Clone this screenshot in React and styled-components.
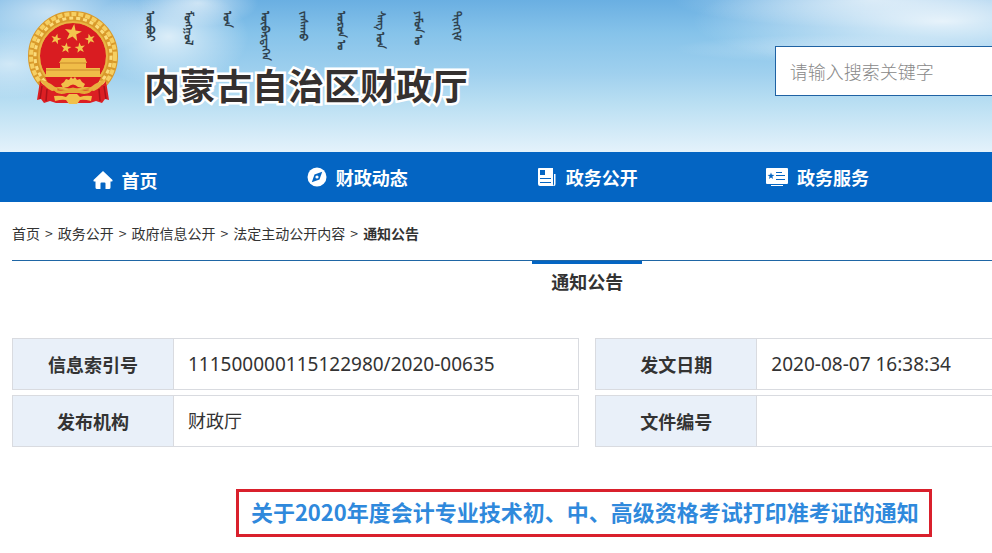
import React from 'react';
import styled, { createGlobalStyle } from 'styled-components';

const GlobalStyle = createGlobalStyle`
    * {
        box-sizing: border-box;
    }
    body {
        margin: 0;
        background: #fff;
        color: #333;
        font-family: 'Noto Sans CJK SC', 'Noto Sans', sans-serif;
        font-size: 18px;
    }
    a {
        color: inherit;
        text-decoration: none;
    }
`;
const Page = styled.div`
    overflow: hidden;
`;
// The content column is wider than a small window and runs off its right edge
const Container = styled.div`
    width: 116%;
    margin-left: 12px;
`;
const Header = styled.header`
    height: 152px;
    background:
        radial-gradient(ellipse 80px 34px at 1% 42%, rgba(255, 255, 255, 0.55), transparent),
        radial-gradient(ellipse 110px 50px at 5% 8%, rgba(255, 255, 255, 0.6), transparent),
        radial-gradient(ellipse 80px 50px at 17% 24%, rgba(255, 255, 255, 0.7), transparent),
        radial-gradient(ellipse 60px 24px at 20% 2%, rgba(255, 255, 255, 0.6), transparent),
        radial-gradient(ellipse 250px 50px at 95% 14%, rgba(255, 255, 255, 0.8), transparent),
        radial-gradient(ellipse 200px 28px at 88% 0%, rgba(255, 255, 255, 0.6), transparent),
        radial-gradient(ellipse 160px 14px at 84% 32%, rgba(255, 255, 255, 0.3), transparent),
        linear-gradient(#6aafe2 0%, #86c3ea 22%, #9fd0ee 48%, #bce0f3 70%, #e4f2fb 100%);
`;
const HeaderInner = styled(Container)`
    display: flex;
    justify-content: space-between;
    align-items: flex-start;
    padding-left: 16px;
`;
const Brand = styled.div`
    display: flex;
    gap: 26px;
    padding-top: 11px;
`;
const Names = styled.div`
    display: flex;
    flex-direction: column;
`;
const Mongolian = styled.div`
    display: flex;
    justify-content: space-between;
    height: 48px;
    padding-right: 2px;
    font-size: 11px;
    line-height: 16px;
    font-weight: 700;
    color: #30424f;
`;
const Word = styled.span`
    writing-mode: vertical-lr;
    white-space: nowrap;
`;
const SiteName = styled.h1`
    margin: 0;
    font-size: 36px;
    line-height: 50px;
    font-weight: 700;
    color: #35302f;
    -webkit-text-stroke: 5px #fff;
    paint-order: stroke fill;
`;
const Search = styled.input`
    flex: none;
    width: 388px;
    height: 50px;
    margin-top: 46px;
    padding: 0 14px;
    border: 1px solid #1f62a3;
    background: #fff;
    font: inherit;
    outline: none;
    &::placeholder {
        color: #888;
        font-weight: 300;
        opacity: 1;
    }
`;
const Nav = styled.nav`
    background: #0465c3;
    color: #fff;
`;
const NavList = styled(Container)`
    display: grid;
    grid-template-columns: repeat(5, 1fr);
`;
const NavLink = styled.a`
    display: flex;
    align-items: center;
    justify-content: center;
    gap: 9px;
    height: 50px;
    padding: ${(props) => (props.$home ? '6px 4px 0 0' : '0')};
    line-height: 26px;
    font-weight: 700;
`;
const Breadcrumb = styled.nav`
    display: flex;
    gap: 5px;
    height: 59px;
    padding-top: 21px;
    border-bottom: 1px solid #1f66a5;
    font-size: 14px;
    line-height: 20px;
`;
const Current = styled.span`
    font-weight: 700;
`;
const Tab = styled.h2`
    width: 110px;
    height: 43px;
    margin: 0 auto 29px;
    padding-top: 4px;
    border-top: 3px solid #0465c3;
    font-size: 18px;
    line-height: 26px;
    text-align: center;
`;
const Tables = styled.div`
    display: grid;
    grid-template-columns: 1fr 1fr;
    gap: 16px;
`;
const Table = styled.table`
    width: 100%;
    table-layout: fixed;
    border-collapse: separate;
    border-spacing: 0 5px;
`;
const Label = styled.th`
    width: 161px;
    height: 52px;
    padding: 0;
    border: 1px solid #d9dbe0;
    border-right: 0;
    background: #e9f0f9;
    font-weight: 700;
`;
const Value = styled.td`
    padding: 0 14px;
    border: 1px solid #d9dbe0;
    font-family: 'Noto Sans', 'Noto Sans CJK SC', sans-serif;
    font-size: ${(props) => (props.$numeric ? '19px' : '18px')};
    line-height: 26px;
`;
const Heading = styled.div`
    display: flex;
    justify-content: center;
    padding: 37px 7px 16px 0;
`;
const Title = styled.h2`
    margin: 0;
    padding: 3px 10px 7px 12px;
    border: 3px solid #d9202c;
    font-size: 22px;
    line-height: 32px;
    color: #2f89dc;
    white-space: nowrap;
`;

const star = '0,-10 2.4,-3.2 9.5,-3.1 3.8,1.2 5.9,8.1 0,4 -5.9,8.1 -3.8,1.2 -9.5,-3.1 -2.4,-3.2';

const Emblem = () => (
    <svg width="90" height="94" viewBox="0 0 90 94" aria-hidden="true">
        <circle cx="45" cy="45" r="38" fill="#d91c21" />
        <circle cx="45" cy="45" r="39" fill="none" stroke="#d99a2b" strokeWidth="12" />
        <circle cx="45" cy="45" r="42" fill="none" stroke="#f6cf62" strokeWidth="4" strokeDasharray="5 2" />
        <circle cx="45" cy="45" r="38" fill="none" stroke="#fbdc7c" strokeWidth="3" strokeDasharray="4 3" />
        <circle cx="45" cy="45" r="34" fill="none" stroke="#e9b444" strokeWidth="2" />
        <g fill="#f3c44d">
            <polygon points={star} transform="translate(45 22) rotate(8) scale(.9)" />
            <polygon points={star} transform="translate(28 28) rotate(15) scale(.55)" />
            <polygon points={star} transform="translate(62 28) rotate(-15) scale(.55)" />
            <polygon points={star} transform="translate(38 37) rotate(8) scale(.55)" />
            <polygon points={star} transform="translate(52 37) rotate(-8) scale(.55)" />
        </g>
        <path d="M34 47 H57 L59 52 H58 V57 H72 V66 H18 V57 H32 V52 H31 Z" fill="#f0bd48" />
        <path d="M32 52 H58 M18 59 H72" stroke="#c98a2a" />
        <path d="M17 66 H73 L68 76 H22 Z" fill="#d91c21" />
        <path d="M12 70 Q16 76 24 77 L36 80 H54 L66 77 Q74 76 78 70 L81 89 L77 88 L74 92 L68 90 L62 92 H28 L22 90 L16 92 L13 88 L9 89 Z" fill="#dc1f23" />
        <path d="M14 75 L12 88 M19 78 L18 90 M71 78 L72 90 M76 75 L78 88" stroke="#a9131a" strokeWidth="1.5" />
        <path d="M12 68 Q24 72 30 79 L24 80 Q17 77 12 68 Z M78 68 Q66 72 60 79 L66 80 Q73 77 78 68 Z" fill="#e9b040" />
        <path d="M36 71 L38 68 L41 69 L43 66 L45 68 L47 66 L49 69 L52 68 L54 71 L57 73 L55 77 L50 76 Q45 71 40 76 L35 77 L33 73 Z" fill="#f1c04a" />
        <path d="M25 78 Q33 81 39 79 Q45 74 51 79 Q57 81 65 78 Q61 85 51 82 H39 Q29 85 25 78 Z" fill="#e5a936" />
        <path d="M26 85 Q33 84 38 86 L41 83 H49 L52 86 Q57 84 64 85 L63 90 Q56 88 52 89 L49 93 H41 L38 89 Q34 88 27 90 Z" fill="#f1c04a" />
    </svg>
);

const HomeIcon = () => (
    <svg width="20" height="20" viewBox="0 0 20 20" fill="currentColor" aria-hidden="true">
        <path d="M10 1 L19.5 10 Q20 11.5 18.6 11.5 H17.5 V17.5 Q17.5 19 16 19 H12.5 V13.5 Q12.5 12.5 11.5 12.5 H8.5 Q7.5 12.5 7.5 13.5 V19 H4 Q2.5 19 2.5 17.5 V11.5 H1.4 Q0 11.5 .5 10 Z" />
    </svg>
);
const CompassIcon = () => (
    <svg width="20" height="20" viewBox="0 0 20 20" aria-hidden="true">
        <circle cx="10" cy="10" r="9.5" fill="#fff" />
        <path d="M15.2 4.8 L12.5 12.5 L4.8 15.2 L7.5 7.5 Z" fill="#0465c3" />
        <circle cx="10" cy="10" r="1.6" fill="#fff" />
    </svg>
);
const DocIcon = () => (
    <svg width="20" height="20" viewBox="0 0 20 20" aria-hidden="true">
        <path d="M2 1 H16 V17 Q16 19 18 19 H3 Q1 19 1 17 V2 Q1 1 2 1 Z" fill="#fff" />
        <path d="M17 7 H18.5 V17 Q18.5 19 17 19" fill="#fff" />
        <path d="M3 3 H8 V8 H3 Z M3 11 H14 V12 H3 Z M3 15 H14 V16 H3 Z M16 7 H17 V17 H16 Z" fill="#0465c3" />
    </svg>
);
const CardIcon = () => (
    <svg width="22" height="20" viewBox="0 0 22 20" aria-hidden="true">
        <path d="M1 1 H21 Q22 1 22 2 V16 Q22 17 21 17 H1 Q0 17 0 16 V2 Q0 1 1 1 Z M5 18 H17 V19 H5 Z" fill="#fff" />
        <polygon points={star} transform="translate(5 9) scale(.36)" fill="#0465c3" />
        <path d="M10 5 H16 V6 H10 Z M10 8 H19 V9 H10 Z M10 12 H19 V13 H10 Z" fill="#0465c3" />
    </svg>
);

const words = ['ᠥᠪᠥᠷ', 'ᠮᠣᠩᠭᠣᠯ', 'ᠤᠨ', 'ᠥᠪᠡᠷᠲᠡᠭᠡᠨ', 'ᠵᠠᠰᠠᠬᠤ', 'ᠣᠷᠣᠨ ᠤ', 'ᠰᠠᠩ ᠤᠨ', 'ᠶᠠᠮᠤᠨ ᠤ', 'ᠲᠢᠩᠬᠢᠮ'];

const links = [
    { text: '首页', icon: <HomeIcon />, home: true },
    { text: '财政动态', icon: <CompassIcon /> },
    { text: '政务公开', icon: <DocIcon /> },
    { text: '政务服务', icon: <CardIcon /> },
];

const crumbs = ['首页', '政务公开', '政府信息公开', '法定主动公开内容'];

const tables = [
    [
        { label: '信息索引号', value: '111500000115122980/2020-00635', numeric: true },
        { label: '发布机构', value: '财政厅' },
    ],
    [
        { label: '发文日期', value: '2020-08-07 16:38:34', numeric: true },
        { label: '文件编号', value: '' },
    ],
];

const App = () => {
    return (
        <Page>
            <GlobalStyle />
            <Header>
                <HeaderInner>
                    <Brand>
                        <Emblem />
                        <Names>
                            <Mongolian lang="mn-Mong">
                                {words.map((word) => <Word key={word}>{word}</Word>)}
                            </Mongolian>
                            <SiteName>内蒙古自治区财政厅</SiteName>
                        </Names>
                    </Brand>
                    <Search type="text" placeholder="请输入搜索关键字" aria-label="请输入搜索关键字" />
                </HeaderInner>
            </Header>
            <Nav>
                <NavList>
                    {links.map((link) => (
                        <NavLink href="#" $home={link.home} key={link.text}>
                            {link.icon}
                            {link.text}
                        </NavLink>
                    ))}
                </NavList>
            </Nav>
            <Container as="main">
                <Breadcrumb>
                    {crumbs.map((crumb) => (
                        <React.Fragment key={crumb}>
                            <a href="#">{crumb}</a>
                            <span>&gt;</span>
                        </React.Fragment>
                    ))}
                    <Current>通知公告</Current>
                </Breadcrumb>
                <Tab>通知公告</Tab>
                <Tables>
                    {tables.map((rows, index) => (
                        <Table key={index}>
                            <tbody>
                                {rows.map((row) => (
                                    <tr key={row.label}>
                                        <Label scope="row">{row.label}</Label>
                                        <Value $numeric={row.numeric}>{row.value}</Value>
                                    </tr>
                                ))}
                            </tbody>
                        </Table>
                    ))}
                </Tables>
                <Heading>
                    <Title>关于2020年度会计专业技术初、中、高级资格考试打印准考证的通知</Title>
                </Heading>
            </Container>
        </Page>
    );
};

export default App;
